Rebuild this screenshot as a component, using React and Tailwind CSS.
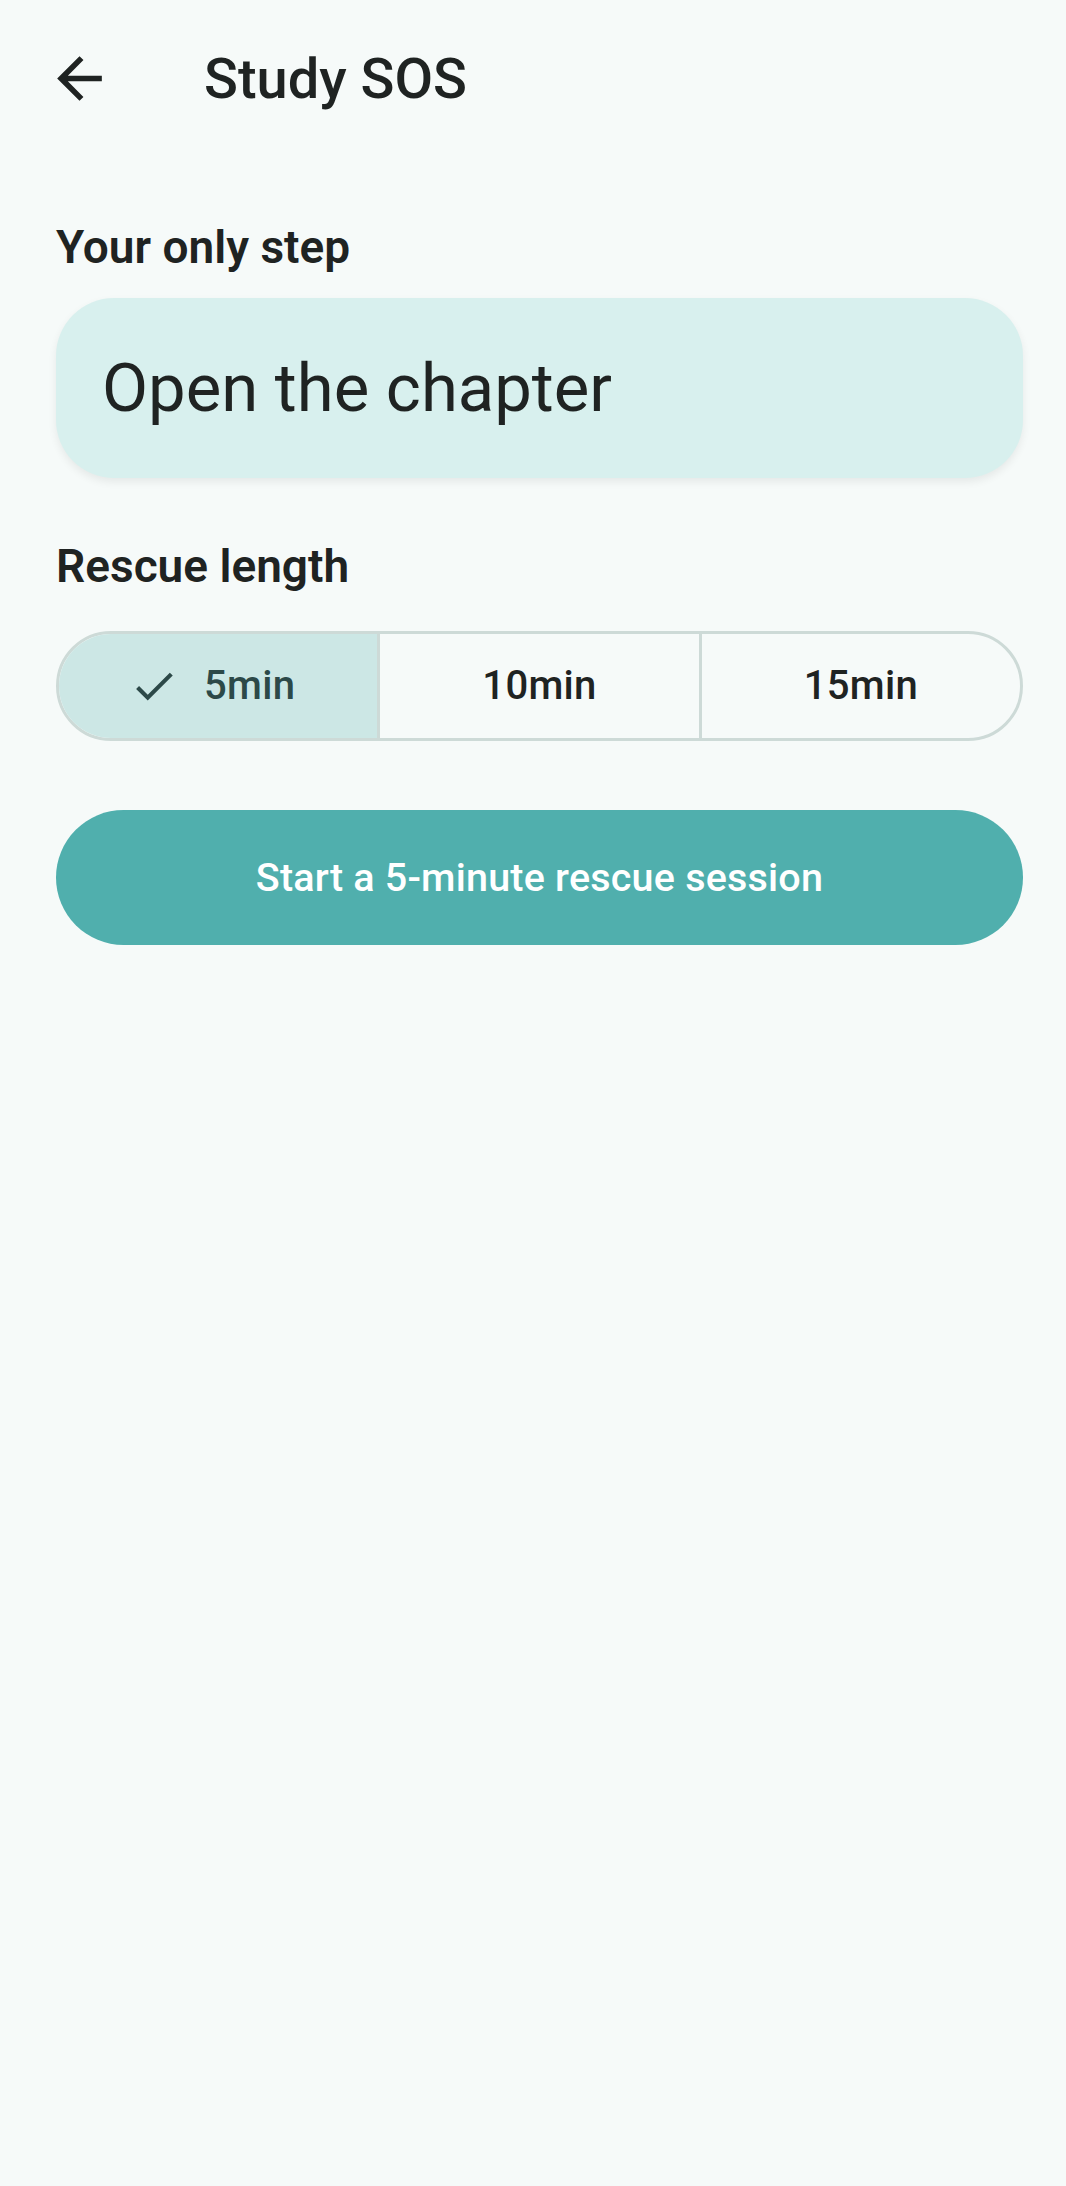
import { useState } from "react";

const options = [5, 10, 15];

export default function App() {
  const [minutes, setMinutes] = useState(5);

  return (
    <div className="min-h-screen bg-[#f6faf9] text-[#1f2322]" style={{ fontFamily: "Roboto, 'Noto Sans', sans-serif" }}>
      <header className="flex h-[157px] items-center">
        <button className="flex h-[157px] w-[158px] items-center justify-center">
          <svg viewBox="0 0 24 24" className="h-[67px] w-[67px] fill-[#1f2322]">
            <path d="M20 11H7.83l5.59-5.59L12 4l-8 8 8 8 1.41-1.41L7.83 13H20v-2z" />
          </svg>
        </button>
        <h1 className="ml-[46px] text-[56px] font-medium leading-none">Study SOS</h1>
      </header>

      <main className="flex flex-col pl-[56px] pr-[43px]">
        <h2 className="mt-[60px] text-[46px] font-semibold leading-[60px]">Your only step</h2>

        <div className="mt-[21px] flex h-[180px] items-center rounded-[58px] bg-[#d8f0ee] pl-[46px] shadow-[0_4px_8px_rgba(0,0,0,0.07)]">
          <p className="text-[67px] leading-none">Open the chapter</p>
        </div>

        <h2 className="mt-[58px] text-[46px] font-semibold leading-[60px]">Rescue length</h2>

        <div className="mt-[35px] flex h-[110px] overflow-hidden rounded-full border-[3px] border-[#cddad7]">
          {options.map((m, i) => {
            const selected = m === minutes;
            return (
              <button
                key={m}
                onClick={() => setMinutes(m)}
                className={`flex flex-1 items-center justify-center gap-[25px] text-[40px] font-medium tracking-[0.3px] ${
                  i > 0 ? "border-l-[3px] border-[#cddad7]" : ""
                } ${selected ? "bg-[#cce7e5] text-[#2c4948]" : "text-[#1f2322]"}`}
              >
                {selected && (
                  <svg viewBox="0 0 24 24" className="-ml-[12px] h-[50px] w-[50px] fill-[#2c4948]">
                    <path d="M9 16.17L4.83 12l-1.42 1.41L9 19 21 7l-1.41-1.41z" />
                  </svg>
                )}
                {m}min
              </button>
            );
          })}
        </div>

        <button className="mt-[69px] flex h-[135px] items-center justify-center rounded-full bg-[#50afad] text-[39.5px] font-medium tracking-[0.2px] text-white">
          Start a {minutes}-minute rescue session
        </button>
      </main>
    </div>
  );
}
